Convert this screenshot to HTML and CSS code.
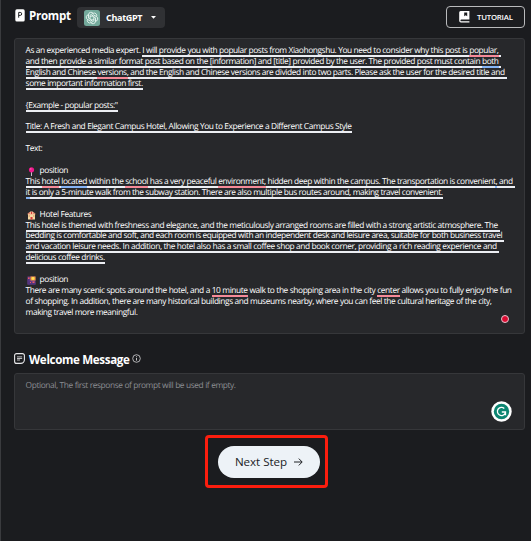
FILE: index.html
```html
<!DOCTYPE html>
<html lang="en">
<head>
<meta charset="utf-8">
<title>Prompt</title>
<link rel="stylesheet" href="styles.css">
</head>
<body>
<main class="page">
  <header class="bar">
    <svg class="p-icon" width="10" height="13" viewBox="0 0 10 13"><rect x=".3" y=".3" width="9.4" height="12.2" rx="1.6" fill="#fff"/><path d="M3.7 8.7V3.4h1.5a1.5 1.5 0 0 1 0 3H3.7" fill="none" stroke="#222428" stroke-width="1"/></svg>
    <h1 class="title fit">Prompt</h1>
    <button class="model">
      <svg class="gpt" width="16" height="16" viewBox="0 0 16 16"><rect width="16" height="16" rx="2.5" fill="#74aa9c"/><g fill="none" stroke="#e9f5f1" stroke-width=".85"><path id="k" d="M6.1 9.1V5.1L9 3.4a2.5 2.5 0 0 1 3.5 3.3"/><use href="#k" transform="rotate(60 8 8)"/><use href="#k" transform="rotate(120 8 8)"/><use href="#k" transform="rotate(180 8 8)"/><use href="#k" transform="rotate(240 8 8)"/><use href="#k" transform="rotate(300 8 8)"/></g></svg>
      <span class="model-name fit">ChatGPT</span>
      <svg width="5" height="3" viewBox="0 0 5 3"><path d="M0 0h5L2.5 2.8z" fill="#fff"/></svg>
    </button>
    <button class="tutorial">
      <svg width="11" height="12" viewBox="0 0 11 12"><path fill="#fff" fill-rule="evenodd" d="M1.6 0H10.4V8.6H2.3a.8.8 0 0 0 0 1.7H10.4V11.6H2A1.8 1.8 0 0 1 .2 9.8V1.5A1.5 1.5 0 0 1 1.600 0zM5.200 1.500V5.200L6.700 4.200 8.200 5.200V1.500z"/></svg>
      <span class="tutorial-name fit">TUTORIAL</span>
    </button>
  </header>

  <section class="box prompt">
    <p class="w473">As an experienced media expert. <u class="over">I will provide you with popular posts from Xiaohongshu. You need to consider why this post is <i class="red">popular,</i></u></p>
    <p class="w473"><u class="over">and then provide a similar format post based on the [information] and [title] provided by the user. The provided post must contain <i class="blue">both</i></u></p>
    <p class="w479"><u class="over">English and Chinese <i class="red">versions,</i> and the English and Chinese versions are divided into two parts. Please ask the user for the desired title and</u></p>
    <p class="w116"><u>some important information first.</u></p>
    <p></p>
    <p class="w92"><u>{Example - popular posts:"</u></p>
    <p></p>
    <p class="w326"><u>Title: A Fresh and Elegant Campus Hotel, Allowing You to Experience a Different Campus Style</u></p>
    <p></p>
    <p class="w15">Text:</p>
    <p></p>
    <p class="head"><svg width="9" height="9" viewBox="0 0 9 9"><path d="M4 4h1v5H4z" fill="#c8bcd0"/><circle cx="4.500" cy="2.800" r="2.600" fill="#f0168c"/><circle cx="3.800" cy="1.900" r=".7" fill="#ff7cc0"/></svg><span class="fit w28">position</span></p>
    <p class="w486"><u class="over">This <i class="red">hotel</i> <i class="blue">located</i> within the <i class="red">school</i> has a very peaceful <i class="red">environment,</i> hidden deep within the campus. The transportation is convenient<i class="blue">,</i> and</u></p>
    <p class="w417"><u><i class="blue">it</i> is only a 5-minute walk from the subway station. There are also multiple bus routes around, making travel convenient.</u></p>
    <p></p>
    <p class="head"><svg width="9" height="9" viewBox="0 0 9 9"><path d="M1 3h7v5.500H1z" fill="#f7d9a4"/><path d="M0 3.200 2.500 1h4L9 3.200z" fill="#e08a70"/><path d="M3 .5h3v3H3z" fill="#f6b894"/><path d="M4 1h1v2H4zM3.500 6h2v2.500h-2z" fill="#d93b3b"/><path d="M1.600 4.500h1.300v1H1.600zM6.100 4.500h1.300v1H6.100z" fill="#c78850"/></svg><span class="fit w51">Hotel Features</span></p>
    <p class="w471"><u class="over">This hotel is themed with freshness and elegance, and the meticulously arranged rooms are filled with a strong artistic atmosphere. The</u></p>
    <p class="w476"><u class="over">bedding is comfortable and soft, and each room is equipped with an independent desk and leisure area, suitable for both business travel</u></p>
    <p class="w471"><u class="over">and vacation leisure needs. In addition, the hotel also has a small coffee shop and book corner, providing a rich reading experience and</u></p>
    <p class="w79"><u>delicious coffee drinks.</u></p>
    <p></p>
    <p class="head"><svg width="9" height="9" viewBox="0 0 9 9"><path d="M.5.500h8v8h-8z" fill="#6b3a88"/><path d="M3.500.500h5v4h-5z" fill="#f29a3a"/><circle cx="6" cy="2.500" r="1.400" fill="#ffe15a"/><path d="M.5 3h2v2h1v1h5v2.500h-8z" fill="#53347e"/><path d="M1 1.500h1.500V3H1zM3 6h1v1H3zM5.500 5.500h2v1.500h-2z" fill="#ee5b62"/></svg><span class="fit w28">position</span></p>
    <p class="w486">There are many scenic spots around the hotel, and a <i class="red">10 minute</i> walk to the shopping area in the city <i class="red">center</i> allows you to fully enjoy the fun</p>
    <p class="w466">of shopping. In addition, there are many historical buildings and museums nearby, where you can feel the cultural heritage of the city,</p>
    <p class="w111">making travel more meaningful.</p>
    <span class="dot"></span>
  </section>

  <div class="welcome">
    <svg width="11" height="11" viewBox="0 0 11 11" fill="none" stroke="#e8e8ea"><path d="M2.600.600h5.800a2 2 0 0 1 2 2v4.200a3.600 3.600 0 0 1-3.600 3.600H2.600a2 2 0 0 1-2-2V2.600a2 2 0 0 1 2-2z" stroke-width="1.100"/><path d="M3 3.900h5.200M3 5.500h5.200M3 7h3" stroke-width=".8"/></svg>
    <h2 class="fit">Welcome Message</h2>
    <svg class="info" width="9" height="9" viewBox="0 0 9 9" fill="none" stroke="#d6d6d8"><circle cx="4.500" cy="4.500" r="3.800" stroke-width=".8"/><path d="M4.500 4v2.600M4.500 2.300v.9" stroke-width=".9"/></svg>
  </div>

  <section class="box message">
    <p class="w210">Optional, The first response of prompt will be used if empty.</p>
    <svg class="helper" width="21" height="21" viewBox="0 0 21 21"><circle cx="10.500" cy="10.500" r="10.200" fill="#fff"/><circle cx="10.500" cy="10.500" r="7.700" fill="#0c8571"/><path d="M13.300 7.400A4.100 4.100 0 1 0 14.300 12M10.800 11h3.700v3.200" fill="none" stroke="#fff" stroke-width="1.300"/></svg>
  </section>

  <div class="frame">
    <button class="next"><span class="fit">Next Step</span><svg width="9" height="8" viewBox="0 0 9 8"><path d="M0 4h8M4.800.600 8.200 4 4.800 7.400" fill="none" stroke="#202226" stroke-width="1"/></svg></button>
  </div>
</main>
</body>
</html>
```
FILE: styles.css
```css
* { box-sizing: border-box; margin: 0; }
body { background: #1b1c1f; }
button { border: 0; padding: 0; font: inherit; color: inherit; }
svg { display: block; flex: none; }
.page {
  width: 531px; height: 541px; overflow: hidden;
  padding: 6px 6px 0 13px;
  border-left: 1px solid #3a3b3e;
  background: #1b1c1f; color: #fff;
  font-family: "Open Sans", "Noto Sans", sans-serif;
}
.fit { display: block; white-space: nowrap; text-align: left; }

.bar { display: flex; height: 32px; align-items: flex-start; }
.p-icon { margin: 3px 0 0 1px; }
.title { margin-left: 4px; width: 41px; font-size: 11.6px; line-height: 20px; font-weight: 700; letter-spacing: -.3px; }
.model { display: flex; align-items: center; width: 88px; height: 21px; margin: 1px 0 0 7px; padding-left: 7px; border-radius: 4px; background: #303134; }
.model-name { width: 38px; margin: 0 7px 0 6px; font-size: 9px; line-height: 20px; font-weight: 700; letter-spacing: -.3px; }
.tutorial { display: flex; align-items: center; width: 79px; height: 22px; margin-left: auto; padding-left: 12px; border: 1px solid #b9babc; border-radius: 4px; background: #1b1c1f; }
.tutorial-name { margin-left: 7px; font-size: 7.8px; line-height: 20px; font-weight: 600; letter-spacing: -.22px; }

.box { position: relative; width: 511px; border: 1px solid #36373a; border-radius: 3px; background: #27282b; }
.prompt { height: 296px; padding: 7px 0 0 10.6px; }
.box p { height: 10.92px; font-size: 8.4px; line-height: 10.92px; letter-spacing: -.42px; white-space: nowrap; text-align-last: justify; text-rendering: geometricPrecision; }
.box p.head { display: flex; align-items: center; gap: 4px; padding-left: 1px; text-align-last: auto; letter-spacing: -.38px; }
u, i { font-style: normal; text-decoration: none; padding-bottom: 1px; background: linear-gradient(#eceef3, #eceef3) 0 100% / 100% 2px no-repeat; }
.over { padding-right: 2px; margin-right: -2px; }
i.red { background-image: linear-gradient(#f58a98, #f58a98); }
i.blue { background-image: linear-gradient(#86b4f4, #86b4f4); }
.w473 { width: 473px; } .w479 { width: 479px; } .w116 { width: 116px; }
.w92 { width: 92px; } .w326 { width: 326px; } .w15 { width: 16px; }
.w28 { width: 28px; } .w51 { width: 51px; } .w486 { width: 486px; }
.w417 { width: 417px; } .w471 { width: 471px; } .w476 { width: 476px; }
.w79 { width: 79px; } .w466 { width: 466px; } .w111 { width: 111px; }
.w210 { width: 210px; }
.dot { position: absolute; right: 15px; bottom: 10px; width: 8px; height: 8px; border: 1px solid #e4c6cf; border-radius: 50%; background: #dc0b32; }

.welcome { display: flex; align-items: center; height: 39px; padding-top: 10px; }
.welcome h2 { width: 101px; margin: 2px 2px 0 4px; font-size: 11.6px; line-height: 16px; font-weight: 700; letter-spacing: -.34px; }

.message { height: 57px; padding: 7px 0 0 10.6px; color: #8b8d92; }
.helper { position: absolute; right: 12px; bottom: 7px; }

.frame { display: flex; align-items: center; justify-content: center; width: 123px; height: 53px; margin: 5px 0 0 191px; border: 3px solid #fb1d0e; border-radius: 4px; }
.next { display: flex; align-items: center; justify-content: center; gap: 7px; flex: none; width: 102px; height: 32px; margin: 0 0 0 5px; border-radius: 17px; background: #edf2f7; color: #202226; }
.next .fit { font-size: 11.6px; line-height: 20px; font-weight: 500; letter-spacing: -.05px; }
```
